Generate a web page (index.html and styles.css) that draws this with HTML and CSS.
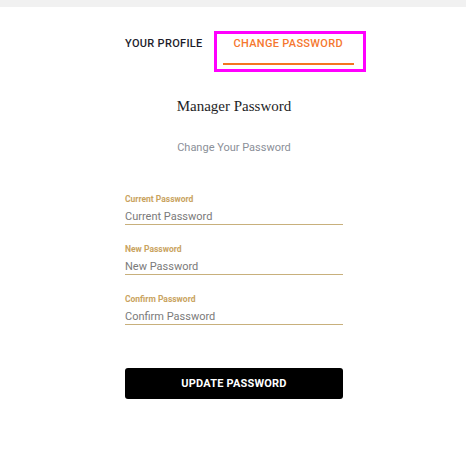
FILE: index.html
```html
<!DOCTYPE html>
<html lang="en">
<head>
<meta charset="utf-8">
<title>Change Password</title>
<link rel="stylesheet" href="styles.css">
</head>
<body>
<div class="topbar"></div>
<main class="panel">
  <nav class="tabs">
    <a class="tab">YOUR PROFILE</a>
    <a class="tab tab-active">CHANGE PASSWORD<span class="highlight"></span></a>
  </nav>
  <h1 class="title">Manager Password</h1>
  <p class="subtitle">Change Your Password</p>
  <form class="form">
    <label class="field">
      <span class="field-label">Current Password</span>
      <input class="field-input" type="password" placeholder="Current Password">
    </label>
    <label class="field">
      <span class="field-label">New Password</span>
      <input class="field-input" type="password" placeholder="New Password">
    </label>
    <label class="field">
      <span class="field-label">Confirm Password</span>
      <input class="field-input" type="password" placeholder="Confirm Password">
    </label>
    <button class="submit" type="button">UPDATE PASSWORD</button>
  </form>
</main>
</body>
</html>
```
FILE: styles.css
```css
* { box-sizing: border-box; }
html, body { margin: 0; padding: 0; background: #ffffff; }
body { font-family: Roboto, "Liberation Sans", sans-serif; }

.topbar { height: 7px; background: #f1f1f1; }

.panel {
  display: flex;
  flex-direction: column;
  align-items: center;
  padding-left: 2px;
}

.tabs {
  display: flex;
  gap: 9px;
  margin-top: 29px;
}
.tab {
  position: relative;
  display: block;
  padding: 0 11px 11px;
  border-bottom: 2px solid transparent;
  font-size: 11px;
  line-height: 16px;
  font-weight: 500;
  letter-spacing: 0.3px;
  color: #1d1d2b;
  text-decoration: none;
}
.tab-active {
  color: #f5772f;
  border-bottom-color: #f47420;
}
.highlight {
  position: absolute;
  left: -9px;
  right: -12px;
  top: -5px;
  bottom: -9px;
  border: 3px solid #ff00ff;
}

.title {
  margin: 32px 0 0;
  font-family: "Liberation Serif", "DejaVu Serif", serif;
  font-weight: 400;
  font-size: 15px;
  line-height: 18px;
  color: #1e1e26;
}
.subtitle {
  margin: 25px 0 0;
  font-size: 11px;
  line-height: 15px;
  color: #8b8f98;
}

.form {
  width: 218px;
  margin-top: 39px;
  display: flex;
  flex-direction: column;
  gap: 19px;
}
.field {
  display: flex;
  flex-direction: column;
  gap: 3px;
}
.field-label {
  font-size: 8.5px;
  line-height: 11px;
  font-weight: 700;
  color: #c9a35e;
}
.field-input {
  display: block;
  width: 100%;
  height: 17px;
  padding: 0;
  border: 0;
  border-bottom: 1px solid #c8b07c;
  outline: none;
  background: transparent;
  font-family: Roboto, "Liberation Sans", sans-serif;
  font-size: 11px;
  color: #333;
}
.field-input::placeholder { color: #7a7a7a; }

.submit {
  margin-top: 24px;
  height: 31px;
  border: 0;
  border-radius: 3px;
  background: #000000;
  color: #ffffff;
  font-family: Roboto, "Liberation Sans", sans-serif;
  font-weight: 700;
  font-size: 11px;
  letter-spacing: 0.2px;
}
```
